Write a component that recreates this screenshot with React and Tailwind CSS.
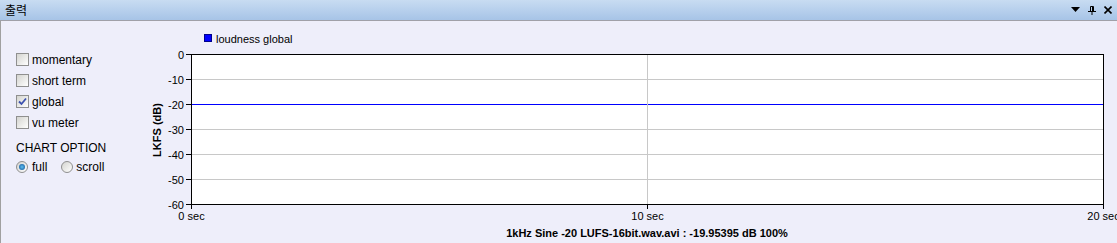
import React from "react";

const font = { fontFamily: "'Liberation Sans', Arial, sans-serif" };

const Checkbox = ({ checked }) => (
  <span className="w-[13px] h-[13px] border border-[#8f8f8f] bg-linear-to-br from-[#d4d4d0] to-[#ffffff] flex items-center justify-center shrink-0">
    {checked && (
      <svg width="9" height="9" viewBox="0 0 9 9">
        <path d="M1 4.5 L3.5 7 L8 1.5" fill="none" stroke="#3d52b0" strokeWidth="1.8" />
      </svg>
    )}
  </span>
);

const Radio = ({ checked }) => (
  <span className="w-[12px] h-[12px] rounded-full border border-[#8f8f8f] bg-linear-to-br from-[#d4d4d0] to-[#ffffff] flex items-center justify-center shrink-0">
    {checked && (
      <span className="w-[6px] h-[6px] rounded-full bg-radial from-[#5fc0f0] to-[#0e4f96]" />
    )}
  </span>
);

const Chart = () => {
  const left = 191;
  const right = 1103;
  const top = 54;
  const bottom = 204;
  const yTicks = [0, -10, -20, -30, -40, -50, -60];
  const xTicks = [
    { x: left, label: "0 sec" },
    { x: (left + right) / 2, label: "10 sec" },
    { x: right, label: "20 sec" },
  ];
  return (
    <svg width="977" height="222" className="block" style={font}>
      <g transform="translate(-140,-21)">
        {/* legend */}
        <rect x="204.5" y="34.5" width="7" height="7" fill="#0000ff" stroke="#00008a" />
        <text x="216" y="38.5" fontSize="11" dominantBaseline="central" fill="#000">
          loudness global
        </text>

        {/* plot */}
        <rect x={left} y={top} width={right - left} height={bottom - top} fill="#fff" />
        {yTicks.slice(1, -1).map((v, i) => {
          const y = top + (i + 1) * 25 + 0.5;
          return (
            <line key={v} x1={left} x2={right} y1={y} y2={y} stroke={v === -20 ? "#0000ff" : "#c8c8c8"} />
          );
        })}
        <line x1="647.5" x2="647.5" y1={top} y2={bottom} stroke="#c8c8c8" />
        <rect x={left + 0.5} y={top + 0.5} width={right - left} height={bottom - top} fill="none" stroke="#000" />

        {yTicks.map((v, i) => {
          const y = top + i * 25 + 0.5;
          return (
            <g key={v}>
              <line x1="186" x2={left} y1={y} y2={y} stroke="#000" />
              <text x="184" y={y} fontSize="11" textAnchor="end" dominantBaseline="central" fill="#000">
                {v}
              </text>
            </g>
          );
        })}

        {xTicks.map((t) => (
          <g key={t.label}>
            <line x1={t.x + 0.5} x2={t.x + 0.5} y1={bottom} y2={bottom + 5} stroke="#000" />
            <text x={t.x + 0.5} y="216" fontSize="11" textAnchor="middle" dominantBaseline="central" fill="#000">
              {t.label}
            </text>
          </g>
        ))}

        <text
          x="157"
          y="130"
          fontSize="11"
          fontWeight="bold"
          textAnchor="middle"
          dominantBaseline="central"
          transform="rotate(-90 157 130)"
          fill="#000"
        >
          LKFS (dB)
        </text>

        <text x="647" y="233" fontSize="11" fontWeight="bold" textAnchor="middle" dominantBaseline="central" fill="#000">
          1kHz Sine -20 LUFS-16bit.wav.avi : -19.95395 dB 100%
        </text>
      </g>
    </svg>
  );
};

export default function App() {
  const options = [
    { label: "momentary", checked: false },
    { label: "short term", checked: false },
    { label: "global", checked: true },
    { label: "vu meter", checked: false },
  ];

  return (
    <div className="w-[1117px] h-[243px] overflow-hidden flex flex-col bg-[#eeeefa] text-black" style={font}>
      {/* Title bar */}
      <div className="h-[21px] shrink-0 flex items-center justify-between border-b border-[#a0a0a8] bg-linear-to-b from-[#c8dcf2] to-[#a7c4e7] pl-[5px] pr-[5px]">
        <span className="text-[12px] leading-none" style={{ fontFamily: "'Noto Sans CJK KR', sans-serif" }}>
          출력
        </span>
        <div className="flex items-center gap-[8px]">
          <svg width="9" height="6" viewBox="0 0 9 6">
            <path d="M0 0 H9 L4.5 5 Z" fill="#000" />
          </svg>
          <svg width="8" height="9" viewBox="0 0 8 9">
            <path d="M2.5 0.5 V5.5 M5.5 0.5 V5.5 M2.5 0.5 H5.5 M0 5.5 H8 M4 5.5 V9" fill="none" stroke="#000" strokeWidth="1" />
            <path d="M4.5 1 V5" stroke="#000" strokeWidth="1" />
          </svg>
          <svg width="8" height="8" viewBox="0 0 8 8">
            <path d="M0.5 0.5 L7.5 7.5 M7.5 0.5 L0.5 7.5" stroke="#000" strokeWidth="1.6" />
          </svg>
        </div>
      </div>

      {/* Body */}
      <div className="flex-1 flex border-l border-[#a0a0a0]">
        <div className="w-[139px] shrink-0 pl-[15px] pt-[28px] text-[12px]">
          {options.map((o) => (
            <div key={o.label} className="h-[21px] flex items-center gap-[3px]">
              <Checkbox checked={o.checked} />
              <span>{o.label}</span>
            </div>
          ))}
          <div className="mt-[7px] h-[16px] flex items-center">CHART OPTION</div>
          <div className="h-[21px] flex items-center">
            <Radio checked />
            <span className="ml-[4px]">full</span>
            <span className="ml-[14px]">
              <Radio />
            </span>
            <span className="ml-[3px]">scroll</span>
          </div>
        </div>
        <Chart />
      </div>
    </div>
  );
}
